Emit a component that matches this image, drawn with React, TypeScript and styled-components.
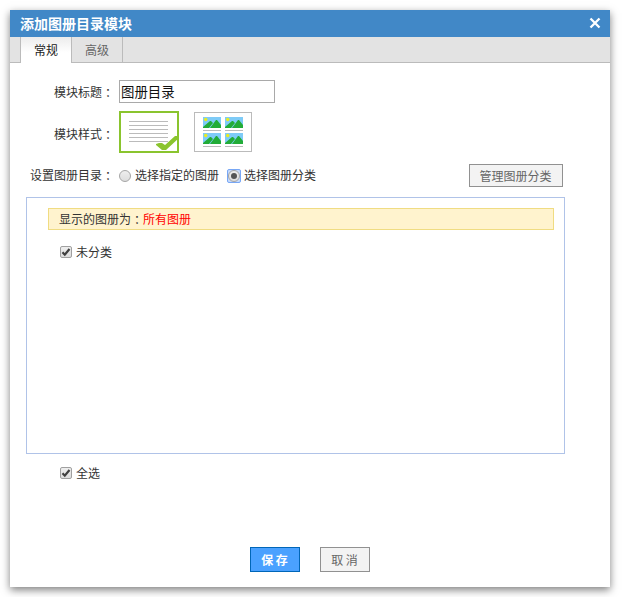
import React from "react";
import styled, { createGlobalStyle, css } from "styled-components";

const Global = createGlobalStyle`
  *, *::before, *::after { box-sizing: border-box; }
  body {
    margin: 0;
    background: #fff;
    color: #333;
    font: 12px/18px "Noto Sans CJK SC", sans-serif;
  }
  svg { display: block; flex: none; }
`;

const Dialog = styled.main`
  display: flex;
  flex-direction: column;
  width: 600px;
  height: 577px;
  margin: 10px;
  background: #fff;
  box-shadow: 0 3px 8px rgba(0, 0, 0, 0.5);
`;

const TitleBar = styled.header`
  display: flex;
  justify-content: space-between;
  align-items: center;
  height: 27px;
  padding: 0 9px 0 10px;
  background: #4188c7;
  color: #fff;
`;

const Title = styled.h1`
  margin: 0;
  font-size: 14px;
  line-height: 27px;
  font-weight: 700;
`;

const CloseButton = styled.button`
  display: flex;
  padding: 0 0 2px;
  border: 0;
  background: none;
`;

const TabBar = styled.nav`
  display: flex;
  height: 26px;
  padding-left: 10px;
  background: #e3e3e3;
  border-bottom: 1px solid #bbb;
`;

const Tab = styled.button<{ $active?: boolean }>`
  width: ${(p) => (p.$active ? 52 : 51)}px;
  height: ${(p) => (p.$active ? 26 : 25)}px;
  padding: ${(p) => (p.$active ? "0 0 1px" : "0")};
  border: solid #bbb;
  border-width: ${(p) => (p.$active ? "0 1px" : "0 1px 0 0")};
  background: ${(p) => (p.$active ? "linear-gradient(#ececec, #fff 60%)" : "#e3e3e3")};
  color: ${(p) => (p.$active ? "#222" : "#666")};
  font: 12px/25px "Noto Sans CJK SC", sans-serif;
`;

const Content = styled.section`
  display: flex;
  flex-direction: column;
  flex: 1;
  padding: 17px 45px 0 16px;
`;

const FormRow = styled.div<{ $height: number; $gap: number; $inset?: number }>`
  display: flex;
  align-items: center;
  height: ${(p) => p.$height}px;
  margin-bottom: ${(p) => p.$gap}px;
  padding-right: ${(p) => p.$inset ?? 0}px;
`;

const Label = styled.span<{ $drop?: number }>`
  width: 88px;
  margin-right: 5px;
  padding-top: ${(p) => p.$drop ?? 0}px;
  text-align: right;
  white-space: nowrap;
`;

const Colon = styled.span`
  display: inline-block;
  width: 12px;
  padding-top: 1px;
  vertical-align: top;
  font-family: "Noto Sans CJK TC", sans-serif;
`;

const TextInput = styled.input`
  width: 156px;
  height: 23px;
  padding: 0 1px 2px;
  border: 1px solid #a9a9a9;
  background: #fff;
  color: #111;
  font: 13.4px/20px "Noto Sans CJK SC", sans-serif;
`;

const StyleOption = styled.button<{ $selected?: boolean }>`
  display: flex;
  padding: 0;
  background: #fff;
  ${(p) =>
    p.$selected
      ? css`
          width: 60px;
          height: 42px;
          margin-right: 15px;
          border: 2px solid #8ac42e;
        `
      : css`
          width: 58px;
          height: 40px;
          border: 1px solid #bbb;
        `}
  svg { overflow: visible; }
`;

const Radio = styled.span<{ $checked?: boolean }>`
  display: flex;
  align-items: center;
  justify-content: center;
  width: 12px;
  height: 12px;
  border: 1px solid #a5a5a5;
  border-radius: 50%;
  background: linear-gradient(#eee, #ddd);
  &::after {
    content: "";
    width: 6px;
    height: 6px;
    border-radius: 50%;
    background: ${(p) => (p.$checked ? "#555" : "transparent")};
  }
`;

const FocusRing = styled.span`
  display: flex;
  margin-left: 8px;
  border: 1px solid #78a7f5;
  border-radius: 2px;
  background: #c6dafb;
`;

const OptionText = styled.span<{ $offset: number }>`
  margin-left: ${(p) => p.$offset}px;
  padding-bottom: 1px;
`;

const Button = styled.button<{ $primary?: boolean; $wide?: boolean }>`
  width: ${(p) => (p.$wide ? 94 : 50)}px;
  height: ${(p) => (p.$wide ? 23 : 25)}px;
  margin-left: ${(p) => (p.$wide ? "auto" : "0")};
  padding: 0 1px 1px 0;
  border: 1px solid ${(p) => (p.$primary ? "#0066b8" : "#919191")};
  background: ${(p) => (p.$primary ? "#4aa1ff" : "#f3f3f3")};
  color: ${(p) => (p.$primary ? "#fff" : "#666")};
  font: ${(p) => (p.$primary ? 700 : 400)} 12px/21px "Noto Sans CJK SC", sans-serif;
`;

const Panel = styled.div`
  width: 539px;
  height: 257px;
  padding: 10px 10px 0 21px;
  border: 1px solid #b0c3e8;
`;

const Notice = styled.p`
  height: 22px;
  margin: 0 0 13px;
  padding: 1px 0 0 10px;
  border: 1px solid #f0dc82;
  background: #fff3ce;
  line-height: 18px;
`;

const Highlight = styled.span`
  color: #f00;
`;

const CheckRow = styled.div<{ $indent: number; $top?: number }>`
  display: flex;
  align-items: center;
  gap: 4px;
  height: 18px;
  margin: ${(p) => p.$top ?? 0}px 0 0 ${(p) => p.$indent}px;
`;

const Box = styled.span`
  display: flex;
  width: 12px;
  height: 12px;
  border: 1px solid #a0a0a0;
  border-radius: 2px;
  background: linear-gradient(#eee, #ddd);
`;

const Footer = styled.footer`
  display: flex;
  justify-content: center;
  gap: 20px;
  padding-bottom: 15px;
`;

const CheckBox = () => (
  <Box>
    <svg width="10" height="10" viewBox="0 0 10 10">
      <path d="M1.5 5.2 3.8 7.7 8.5 2" fill="none" stroke="#404040" strokeWidth="2.2" />
    </svg>
  </Box>
);

const ListIcon = () => (
  <svg width="56" height="38" viewBox="0 0 56 38">
    <path
      d="M8 8.5h39M8 12.5h39M8 16.5h39M8 20.5h39M8 24.5h39M8 28.5h39"
      stroke="#bbb"
    />
    <path d="M35 32v-1l3-1h3l3 2 10-9h4v2L45 37h-4Z" fill="#8ac42e" />
  </svg>
);

const Thumb = ({ x, y }: { x: number; y: number }) => (
  <g transform={`translate(${x} ${y})`}>
    <path d="M0 0h18v11H0Z" fill="#7ecbf7" />
    <path d="M0 11V10L7 4h1l2 2-4 5ZM7 11l6-8h1l4 5v3Z" fill="#22ac38" />
    <circle cx="2.7" cy="2.5" r="1.7" fill="#e8ec20" />
    <path d="M0 13.5h18" stroke="#bbb" />
  </g>
);

const GridIcon = () => (
  <svg width="56" height="38" viewBox="0 0 56 38">
    <Thumb x={8} y={4} />
    <Thumb x={30} y={4} />
    <Thumb x={8} y={20} />
    <Thumb x={30} y={20} />
  </svg>
);

export default function App() {
  return (
    <>
      <Global />
      <Dialog>
        <TitleBar>
          <Title>添加图册目录模块</Title>
          <CloseButton aria-label="关闭">
            <svg width="12" height="12" viewBox="0 0 12 12">
              <path d="m1.5 1.5 9 9m0-9-9 9" stroke="#fff" strokeWidth="2.3" />
            </svg>
          </CloseButton>
        </TitleBar>
        <TabBar>
          <Tab $active>常规</Tab>
          <Tab>高级</Tab>
        </TabBar>
        <Content>
          <FormRow $height={23} $gap={8}>
            <Label $drop={1}>模块标题<Colon>：</Colon></Label>
            <TextInput defaultValue="图册目录" />
          </FormRow>
          <FormRow $height={42} $gap={11}>
            <Label $drop={4}>模块样式<Colon>：</Colon></Label>
            <StyleOption $selected aria-label="列表"><ListIcon /></StyleOption>
            <StyleOption aria-label="缩略图"><GridIcon /></StyleOption>
          </FormRow>
          <FormRow $height={23} $gap={10} $inset={2}>
            <Label>设置图册目录<Colon>：</Colon></Label>
            <Radio />
            <OptionText $offset={4}>选择指定的图册</OptionText>
            <FocusRing><Radio $checked /></FocusRing>
            <OptionText $offset={3}>选择图册分类</OptionText>
            <Button $wide>管理图册分类</Button>
          </FormRow>
          <Panel>
            <Notice>
              显示的图册为<Colon>：</Colon>
              <Highlight>所有图册</Highlight>
            </Notice>
            <CheckRow $indent={12}><CheckBox />未分类</CheckRow>
          </Panel>
          <CheckRow $indent={34} $top={10}><CheckBox />全选</CheckRow>
        </Content>
        <Footer>
          <Button $primary>保 存</Button>
          <Button>取 消</Button>
        </Footer>
      </Dialog>
    </>
  );
}
